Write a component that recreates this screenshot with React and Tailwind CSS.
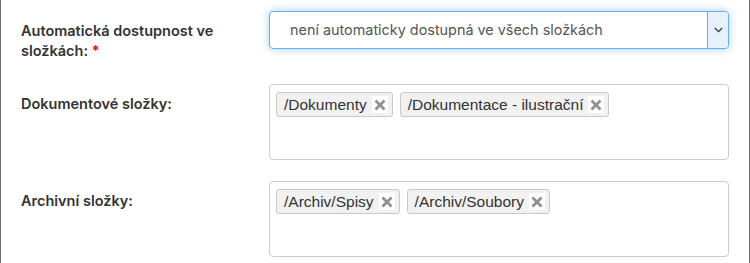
import React from "react";

function Tag({ label }) {
  return (
    <span className="flex items-center h-[25px] pl-[7px] pr-[4px] bg-[#f1f1f1] border border-[#c9c9c9] rounded-[3px] text-[15.5px] text-[#333] font-['Liberation_Sans',Arial,sans-serif] leading-none">
      <span>{label}</span>
      <span className="ml-[5px] flex items-center justify-center w-[16px] h-[17px] bg-white">
        <svg width="12" height="12" viewBox="0 0 12 12" fill="none">
          <path d="M1.5 1.5 L10.5 10.5 M10.5 1.5 L1.5 10.5" stroke="#8f8f8f" strokeWidth="2.8" strokeLinecap="butt" />
        </svg>
      </span>
    </span>
  );
}

function Label({ children }) {
  return (
    <div className="w-[268px] shrink-0 pl-[20px] pr-[20px] pt-[10px] text-[14.5px] leading-[20px] font-semibold text-[#333] font-['Inter',sans-serif]">
      {children}
    </div>
  );
}

export default function App() {
  return (
    <div className="w-[750px] h-[263px] bg-white border-l border-r border-[#6b6b6b] overflow-hidden font-['Inter',sans-serif]">
      <div className="flex mt-[11px]">
        <Label>
          Automatická dostupnost ve složkách: <span className="text-[#e00]">*</span>
        </Label>
        <div className="w-[460px] shrink-0 h-[38px] flex border border-[#66afe9] rounded-[4px] shadow-[0_0_8px_rgba(102,175,233,0.6)] bg-white">
          <div className="flex-1 flex items-center pl-[20px] text-[14.4px] text-[#555]">
            není automaticky dostupná ve všech složkách
          </div>
          <div className="w-[21px] flex items-center justify-center bg-[#e7f1fb] border-l border-[#66afe9] rounded-r-[3px]">
            <svg width="9" height="6" viewBox="0 0 9 6" fill="none">
              <path d="M0.8 1 L4.5 4.7 L8.2 1" stroke="#333" strokeWidth="1.2" />
            </svg>
          </div>
        </div>
      </div>

      <div className="flex mt-[23px]">
        <Label>Dokumentové složky:</Label>
        <div className="w-[460px] shrink-0 h-[76px] border border-[#cccccc] rounded-[4px] pt-[7px] pl-[6px] flex items-start gap-[7px]">
          <Tag label="/Dokumenty" />
          <Tag label="/Dokumentace - ilustrační" />
        </div>
      </div>

      <div className="flex mt-[21px]">
        <Label>Archivní složky:</Label>
        <div className="w-[460px] shrink-0 h-[76px] border border-[#cccccc] rounded-[4px] pt-[7px] pl-[6px] flex items-start gap-[7px]">
          <Tag label="/Archiv/Spisy" />
          <Tag label="/Archiv/Soubory" />
        </div>
      </div>
    </div>
  );
}
